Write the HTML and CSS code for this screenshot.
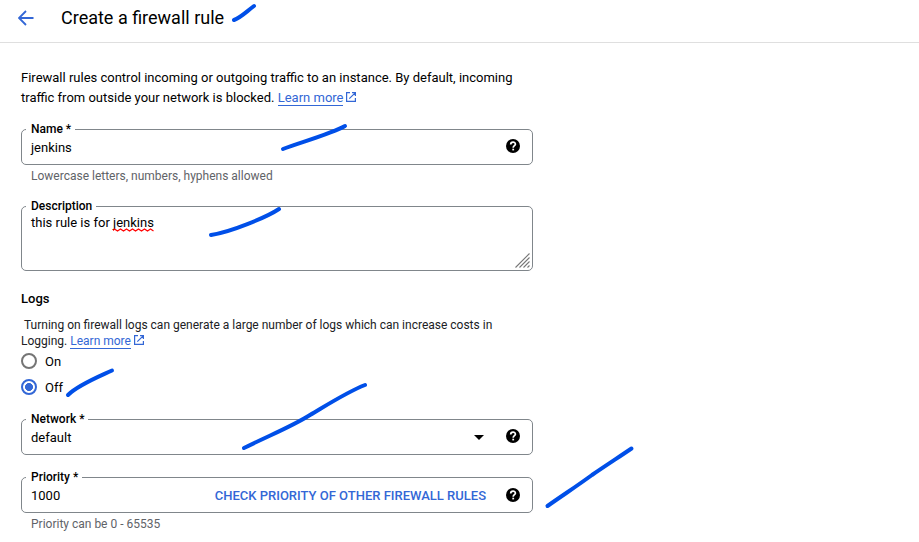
FILE: index.html
```html
<!DOCTYPE html>
<html lang="en">
<head>
<meta charset="utf-8">
<title>Create a firewall rule</title>
<link rel="stylesheet" href="styles.css">
</head>
<body>
<svg class="defs" width="0" height="0" aria-hidden="true">
  <symbol id="help" viewBox="0 0 14 14"><circle cx="7" cy="7" r="7"/><path d="M4.700 5.500C4.700 2.400 9.400 2.400 9.400 5.200C9.400 6.700 7.200 6.700 7.200 8.700" fill="none" stroke="#fff" stroke-width="1.700"/><path d="M6.300 9.700h1.800v1.700H6.300z" fill="#fff"/></symbol>
  <symbol id="external" viewBox="0 0 12 12"><path d="M5 1.600H1.600V10.400H10.400V7M7 1.600H10.400V5M10.200 1.800L4.300 7.700" fill="none" stroke="currentColor" stroke-width="1.200"/></symbol>
</svg>
<header class="topbar">
  <svg class="back" viewBox="0 0 16 16"><path d="M15.500 8H1.500M8 1L1 8l7 7" /></svg>
  <h1>Create a firewall rule</h1>
</header>
<main class="form">
  <p class="intro">Firewall rules control incoming or outgoing traffic to an instance. By default, incoming<br>traffic from outside your network is blocked. <a class="link">Learn more</a><svg class="external"><use href="#external"/></svg></p>

  <div class="field">
    <label>Name *</label>
    <span class="value">jenkins</span>
    <svg class="help"><use href="#help"/></svg>
  </div>
  <div class="hint">Lowercase letters, numbers, hyphens allowed</div>

  <div class="field area">
    <label>Description</label>
    <span class="value">this rule is for <span class="misspelled">jenkins<svg class="squiggle" viewBox="0 0 41 4"><path d="M0 2.500L1.500 1 4.500 3 7.500 1 10.500 3 13.500 1 16.500 3 19.500 1 22.500 3 25.500 1 28.500 3 31.500 1 34.500 3 37.500 1 40.500 3"/></svg></span></span>
    <svg class="grip" viewBox="0 0 15 15"><path d="M.5 14.500l14-14M4.500 14.500l10-10M8.500 14.500l6-6M12.500 14.500l2-2"/></svg>
  </div>

  <h2>Logs</h2>
  <p class="note">&nbsp;Turning on firewall logs can generate a large number of logs which can increase costs in<br>Logging. <a class="link">Learn more</a><svg class="external"><use href="#external"/></svg></p>
  <div class="option"><span class="radio"></span><span class="text">On</span></div>
  <div class="option"><span class="radio checked"></span><span class="text">Off</span></div>

  <div class="field network">
    <label>Network *</label>
    <span class="value">default</span>
    <svg class="caret" viewBox="0 0 10 5"><path d="M0 0h10L5 5z"/></svg>
    <svg class="help"><use href="#help"/></svg>
  </div>
  <div class="field priority">
    <label>Priority *</label>
    <span class="value">1000</span>
    <a class="action">CHECK PRIORITY OF OTHER FIREWALL RULES</a>
    <svg class="help"><use href="#help"/></svg>
  </div>
  <div class="hint">Priority can be 0 - 65535</div>
</main>
<svg class="marks" viewBox="0 0 919 542" aria-hidden="true">
  <path d="M234 20C240 18 246 12 254 6"/>
  <path d="M283 149C298 143 331 134 345 126"/>
  <path d="M211 235C231 232 267 217 279 209"/>
  <path d="M68 395C78 385 98 377 112 370.500"/>
  <path d="M244 448C270 435 291 427 310 415C327 405 347 392 365 385"/>
  <path d="M547.500 506C563 495 577 486 592 475C605 466 619 457 631.500 448.500"/>
</svg>
</body>
</html>
```
FILE: styles.css
```css
* { box-sizing: border-box; }
body {
  margin: 0;
  position: relative;
  height: 542px;
  overflow: hidden;
  background: #fff;
  color: #000;
  font: 13px/20px Roboto, sans-serif;
}
h1, h2, p { margin: 0; }
svg { display: block; flex: none; }
.defs { position: absolute; }

.topbar {
  display: flex;
  align-items: center;
  height: 43px;
  padding: 0 0 7px 17.5px;
  border-bottom: 1px solid #dfdfdf;
}
.back { width: 16px; height: 16px; fill: none; stroke: #3367d6; stroke-width: 1.8; }
h1 { margin-left: 27.5px; font-size: 18px; line-height: 24px; font-weight: 400; }

.form { width: 533px; padding: 25px 0 0 21px; }
.intro { white-space: nowrap; }
.link { color: #3367d6; border-bottom: 1px solid #3367d6; }
.external {
  display: inline-block;
  width: 12px;
  height: 12px;
  margin-left: 2px;
  vertical-align: -1px;
  color: #3367d6;
}

.field {
  position: relative;
  display: flex;
  align-items: center;
  height: 36px;
  margin-top: 21px;
  padding: 0 12px 0 9px;
  border: 1px solid #80868b;
  border-radius: 5px;
}
.field label {
  position: absolute;
  top: -9px;
  left: 4px;
  padding: 0 4px 0 5px;
  background: #fff;
  font-size: 12px;
  line-height: 16px;
  font-weight: 500;
}
.value { flex: 1; padding-top: 2px; white-space: nowrap; }
.help { width: 14px; height: 14px; margin-bottom: 2px; fill: #000; }
.hint { padding: 1px 0 0 10px; font-size: 12px; color: #5f6368; }

.area { height: 65px; margin-top: 20px; align-items: flex-start; padding-top: 4px; }
.misspelled { position: relative; }
.squiggle { position: absolute; left: 0; top: 13px; width: 41px; height: 4px; fill: none; stroke: #f00; stroke-width: 1.2; }
.grip { position: absolute; right: 2px; bottom: 2px; width: 15px; height: 15px; fill: none; stroke: #777; stroke-width: 1.1; }

h2 { margin-top: 18px; font-size: 13px; line-height: 20px; font-weight: 500; }
.note { margin: 8px 0 2px; font-size: 12px; line-height: 16px; color: #202124; white-space: nowrap; }
.option { display: flex; align-items: center; gap: 8px; height: 20px; margin-bottom: 6px; }
.text { padding-top: 2px; }
.radio { width: 16px; height: 16px; border: 2px solid #757575; border-radius: 50%; }
.radio.checked { border-color: #3367d6; background: radial-gradient(circle, #3367d6 3.7px, #fff 4.3px); }

.network { margin-top: 22px; }
.caret { width: 10px; height: 5px; margin-right: 22px; }
.priority { margin-top: 22px; }
.priority .help { margin-bottom: 0; }
.action { margin-right: 20px; padding-top: 2px; color: #3367d6; font-weight: 500; white-space: nowrap; }

.marks {
  position: absolute;
  inset: 0;
  width: 919px;
  height: 542px;
  pointer-events: none;
  fill: none;
  stroke: #004fe8;
  stroke-width: 4;
  stroke-linecap: round;
  stroke-linejoin: round;
}
```
